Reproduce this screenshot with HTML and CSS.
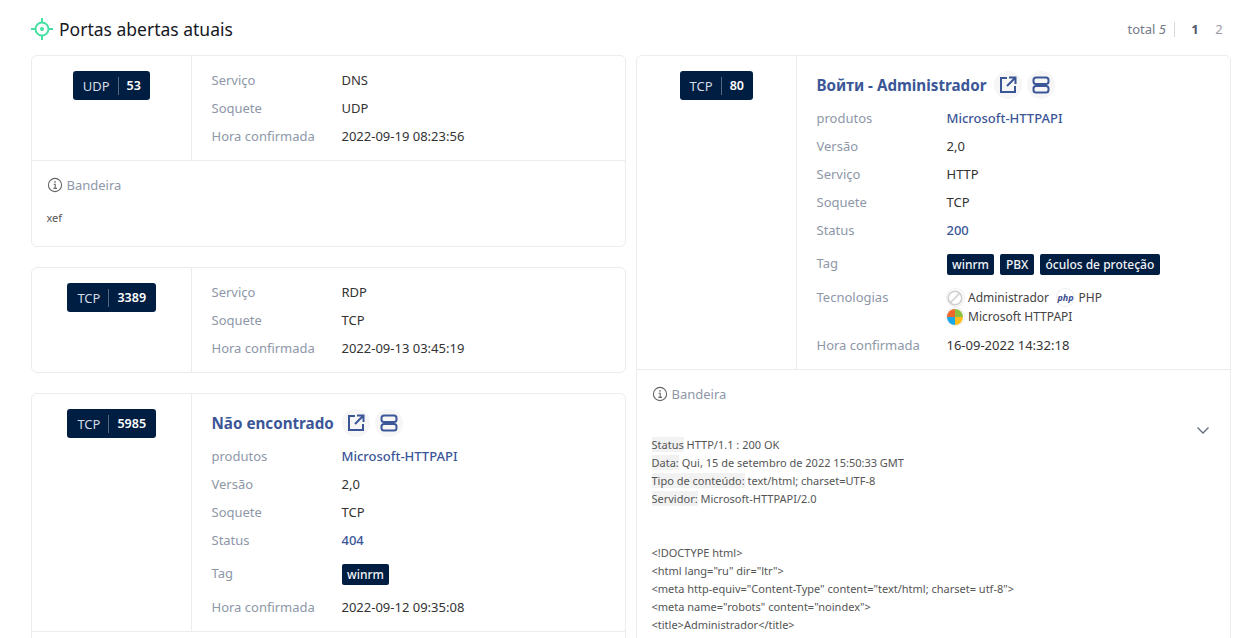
FILE: index.html
```html
<!DOCTYPE html>
<html lang="pt">
<head>
    <meta charset="UTF-8">
    <meta name="viewport" content="width=device-width, initial-scale=1.0">
    <title>Portas abertas atuais</title>
    <link rel="stylesheet" href="styles.css">
</head>
<body>
    <div class="page">
        <!-- Cabecalho -->
        <header class="head">
            <h2 class="title">
                <svg class="title-icon" width="22" height="22" viewBox="0 0 22 22" fill="none" stroke="#45e0a2" stroke-width="2">
                    <circle cx="11" cy="11" r="6.500"/>
                    <path d="M11 0v4.500M11 17.500V22M0 11h4.500M17.500 11H22"/>
                    <circle cx="11" cy="11" r="2" fill="#45e0a2" stroke="none"/>
                </svg>
                Portas abertas atuais
            </h2>
            <div class="pager">
                <span class="total">total <i>5</i></span>
                <span class="page-num current">1</span>
                <span class="page-num">2</span>
            </div>
        </header>

        <div class="columns">
            <div class="column">
                <!-- UDP 53 -->
                <section class="card">
                    <div class="card-top">
                        <div class="port-cell"><span class="port"><span>UDP</span><b>53</b></span></div>
                        <div class="info">
                            <div class="row"><span class="key">Serviço</span><span>DNS</span></div>
                            <div class="row"><span class="key">Soquete</span><span>UDP</span></div>
                            <div class="row"><span class="key">Hora confirmada</span><span>2022-09-19 08:23:56</span></div>
                        </div>
                    </div>
                    <div class="banner banner-short">
                        <div class="banner-label">
                            <svg width="16" height="16" viewBox="0 0 16 16" fill="none" stroke="#666" stroke-width="1.100"><circle cx="8" cy="8" r="6.600"/><path d="M6.600 7.200H8.200V11.400M6.400 11.400H10"/><circle cx="8" cy="4.900" r=".8" fill="#666" stroke="none"/></svg>
                            Bandeira
                        </div>
                        <pre class="banner-text">xef</pre>
                    </div>
                </section>

                <!-- TCP 3389 -->
                <section class="card">
                    <div class="card-top">
                        <div class="port-cell"><span class="port"><span>TCP</span><b>3389</b></span></div>
                        <div class="info">
                            <div class="row"><span class="key">Serviço</span><span>RDP</span></div>
                            <div class="row"><span class="key">Soquete</span><span>TCP</span></div>
                            <div class="row"><span class="key">Hora confirmada</span><span>2022-09-13 03:45:19</span></div>
                        </div>
                    </div>
                </section>

                <!-- TCP 5985 -->
                <section class="card">
                    <div class="card-top">
                        <div class="port-cell"><span class="port"><span>TCP</span><b>5985</b></span></div>
                        <div class="info">
                            <div class="site">
                                <a class="site-name">Não encontrado</a>
                                <span class="round-btn"><svg width="20" height="20" viewBox="0 0 20 20" fill="none" stroke="#3b5697" stroke-width="2"><path d="M9 3H3v14h14v-6M11 2.500h6.500V9M17 3l-8 8"/></svg></span>
                                <span class="round-btn"><svg width="20" height="20" viewBox="0 0 20 20" fill="none" stroke="#3b5697" stroke-width="2"><rect x="2.500" y="2.500" width="15" height="6.500" rx="2.500"/><rect x="2.500" y="11" width="15" height="6.500" rx="2.500"/></svg></span>
                            </div>
                            <div class="row"><span class="key">produtos</span><a class="link">Microsoft-HTTPAPI</a></div>
                            <div class="row"><span class="key">Versão</span><span>2,0</span></div>
                            <div class="row"><span class="key">Soquete</span><span>TCP</span></div>
                            <div class="row"><span class="key">Status</span><a class="link">404</a></div>
                            <div class="row row-tags"><span class="key">Tag</span><span class="tags"><span class="tag">winrm</span></span></div>
                            <div class="row"><span class="key">Hora confirmada</span><span>2022-09-12 09:35:08</span></div>
                        </div>
                    </div>
                    <div class="banner"></div>
                </section>
            </div>

            <div class="column">
                <!-- TCP 80 -->
                <section class="card">
                    <div class="card-top">
                        <div class="port-cell"><span class="port"><span>TCP</span><b>80</b></span></div>
                        <div class="info">
                            <div class="site">
                                <a class="site-name">Войти - Administrador</a>
                                <span class="round-btn"><svg width="20" height="20" viewBox="0 0 20 20" fill="none" stroke="#3b5697" stroke-width="2"><path d="M9 3H3v14h14v-6M11 2.500h6.500V9M17 3l-8 8"/></svg></span>
                                <span class="round-btn"><svg width="20" height="20" viewBox="0 0 20 20" fill="none" stroke="#3b5697" stroke-width="2"><rect x="2.500" y="2.500" width="15" height="6.500" rx="2.500"/><rect x="2.500" y="11" width="15" height="6.500" rx="2.500"/></svg></span>
                            </div>
                            <div class="row"><span class="key">produtos</span><a class="link">Microsoft-HTTPAPI</a></div>
                            <div class="row"><span class="key">Versão</span><span>2,0</span></div>
                            <div class="row"><span class="key">Serviço</span><span>HTTP</span></div>
                            <div class="row"><span class="key">Soquete</span><span>TCP</span></div>
                            <div class="row"><span class="key">Status</span><a class="link">200</a></div>
                            <div class="row row-tags"><span class="key">Tag</span><span class="tags"><span class="tag">winrm</span><span class="tag">PBX</span><span class="tag">óculos de proteção</span></span></div>
                            <div class="row row-tech">
                                <span class="key">Tecnologias</span>
                                <span class="techs">
                                    <span class="tech">
                                        <span class="tech-icon"><svg width="16" height="16" viewBox="0 0 16 16" fill="none" stroke="#cfcfcf" stroke-width="1.600"><circle cx="8" cy="8" r="6.800"/><path d="M3.200 12.800l9.600-9.600"/></svg></span>
                                        Administrador
                                    </span>
                                    <span class="tech">
                                        <span class="tech-icon php">php</span>
                                        PHP
                                    </span>
                                    <span class="tech">
                                        <span class="tech-icon"><svg width="16" height="16" viewBox="0 0 16 16"><path d="M8 8V0a8 8 0 0 0-8 8z" fill="#f0672b"/><path d="M8 8V0a8 8 0 0 1 8 8z" fill="#8cc13f"/><path d="M8 8H0a8 8 0 0 0 8 8z" fill="#19a8e8"/><path d="M8 8h8a8 8 0 0 1-8 8z" fill="#fcbd1a"/></svg></span>
                                        Microsoft HTTPAPI
                                    </span>
                                </span>
                            </div>
                            <div class="row"><span class="key">Hora confirmada</span><span>16-09-2022 14:32:18</span></div>
                        </div>
                    </div>
                    <div class="banner">
                        <div class="banner-label">
                            <svg width="16" height="16" viewBox="0 0 16 16" fill="none" stroke="#666" stroke-width="1.100"><circle cx="8" cy="8" r="6.600"/><path d="M6.600 7.200H8.200V11.400M6.400 11.400H10"/><circle cx="8" cy="4.900" r=".8" fill="#666" stroke="none"/></svg>
                            Bandeira
                        </div>
                        <svg class="chevron" width="14" height="14" viewBox="0 0 14 14" fill="none" stroke="#5f6b7a" stroke-width="1.300"><path d="M1.500 4.500L7 10l5.500-5.500"/></svg>
                        <pre class="banner-text banner-long"><mark>Status</mark> HTTP/1.1 : 200 OK
<mark>Data:</mark> Qui, 15 de setembro de 2022 15:50:33 GMT
<mark>Tipo de conteúdo:</mark> text/html; charset=UTF-8
<mark>Servidor:</mark> Microsoft-HTTPAPI/2.0


&lt;!DOCTYPE html&gt;
&lt;html lang="ru" dir="ltr"&gt;
&lt;meta http-equiv="Content-Type" content="text/html; charset= utf-8"&gt;
&lt;meta name="robots" content="noindex"&gt;
&lt;title&gt;Administrador&lt;/title&gt;</pre>
                    </div>
                </section>
            </div>
        </div>
    </div>
</body>
</html>
```

FILE: styles.css
```css
* {
    box-sizing: border-box;
}

html, body {
    height: 100%;
    margin: 0;
    overflow: hidden;
}

body {
    background-color: #fff;
    font-family: 'Noto Sans', 'Open Sans', sans-serif;
    font-size: 13px;
    color: #333;
}

.page {
    height: 100vh;
    overflow: hidden;
    padding: 0 27px 0 31px;
}

.head {
    display: flex;
    justify-content: space-between;
    align-items: center;
    height: 55px;
    padding-top: 3px;
}

.title {
    display: flex;
    align-items: center;
    gap: 6px;
    margin: 0;
    font-size: 17.500px;
    font-weight: 400;
    color: #16191f;
}

.title-icon {
    flex: none;
}

.pager {
    display: flex;
    align-items: center;
    font-size: 13px;
    color: #767b8a;
}

.total {
    padding-right: 8px;
    margin-right: 8px;
    border-right: 1px solid #d8d8d8;
    line-height: 15px;
}

.page-num {
    width: 24px;
    text-align: center;
    color: #9a9da6;
}

.page-num.current {
    font-weight: 700;
    color: #555a6e;
}

.columns {
    display: grid;
    grid-template-columns: 595px 595px;
    gap: 10px;
    align-items: start;
}

.column {
    display: flex;
    flex-direction: column;
    gap: 20px;
}

.card {
    border: 1px solid #ececec;
    border-radius: 6px;
}

.card-top {
    display: flex;
}

.port-cell {
    flex: none;
    width: 160px;
    display: flex;
    justify-content: center;
    align-items: flex-start;
    padding-top: 15px;
    border-right: 1px solid #ececec;
}

.port {
    display: flex;
    align-items: center;
    height: 29px;
    padding: 0 9.500px 0 10px;
    border-radius: 3px;
    background-color: #001e42;
    color: #d5dbe4;
}

.port b {
    font-size: 12.500px;
    font-weight: 600;
    color: #fff;
    margin-left: 8px;
    padding-left: 8px;
    border-left: 1px solid #56677f;
    line-height: 18px;
}

.info {
    flex: 1;
    padding: 10px 20px 10px 19.500px;
}

.site {
    display: flex;
    align-items: center;
    gap: 5px;
    height: 28px;
    margin: 5px 0 5px;
}

.site-name {
    margin-right: 3px;
    font-size: 15.200px;
    font-weight: 700;
    color: #3b5697;
}

.round-btn {
    display: flex;
    justify-content: center;
    align-items: center;
    width: 28px;
    height: 28px;
    border-radius: 50%;
    background-color: #f6f6f7;
}

.row {
    display: flex;
    align-items: center;
    min-height: 28px;
    color: #333;
}

.key {
    flex: none;
    width: 130px;
    color: #8e97a8;
}

.link {
    color: #3b5697;
    font-weight: 500;
}

.row-tags {
    height: 39px;
    padding-bottom: 2px;
}

.tags {
    display: flex;
    gap: 6px;
    padding-top: 4px;
}

.tag {
    padding: 0 5.500px;
    height: 21px;
    line-height: 21px;
    border-radius: 2px;
    background-color: #001e42;
    color: #f2f4f7;
    font-size: 12px;
    font-weight: 500;
}

.row-tech {
    align-items: flex-start;
    padding-top: 5px;
    height: 48px;
}

.techs {
    display: flex;
    flex-wrap: wrap;
    width: 220px;
    column-gap: 8px;
}

.tech {
    display: flex;
    align-items: center;
    gap: 4.500px;
    height: 19px;
    color: #444;
    font-size: 12px;
}

.tech-icon {
    display: flex;
    justify-content: center;
    align-items: center;
    width: 17px;
    height: 17px;
    border-radius: 50%;
    box-shadow: 0 0 0 1px #eee;
}

.tech-icon.php {
    font-size: 9px;
    font-weight: 700;
    font-style: italic;
    color: #3d4c8f;
}

.banner {
    position: relative;
    min-height: 85px;
    padding: 14px 15px 14px 14.500px;
    border-top: 1px solid #ececec;
}

.banner-short {
    height: 86px;
}

.banner-label {
    display: flex;
    align-items: center;
    gap: 4px;
    height: 20px;
    color: #8e97a8;
}

.banner-text {
    margin: 14px 0 0;
    font-family: inherit;
    font-size: 11px;
    line-height: 18px;
    color: #555;
    white-space: pre-wrap;
}

.banner-long {
    margin-top: 32px;
}

.banner-text mark {
    background-color: #f2f2f2;
    color: #555;
}

.chevron {
    position: absolute;
    top: 53px;
    right: 20px;
}
```
